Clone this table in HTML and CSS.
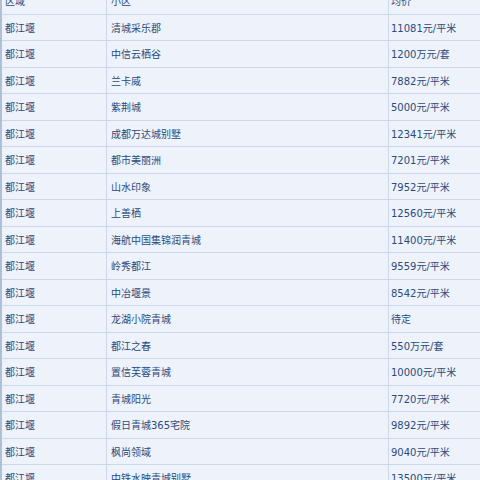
FILE: index.html
```html
<!DOCTYPE html>
<html lang="zh">
<head>
<meta charset="utf-8">
<link rel="stylesheet" href="styles.css">
</head>
<body>
<div class="wrap">
<table class="price-table">
<thead>
<tr><th class="c1">区域</th><th class="c2">小区</th><th class="c3">均价</th></tr>
</thead>
<tbody>
<tr><td>都江堰</td><td>清城采乐郡</td><td>11081元/平米</td></tr>
<tr><td>都江堰</td><td>中信云栖谷</td><td>1200万元/套</td></tr>
<tr><td>都江堰</td><td>兰卡威</td><td>7882元/平米</td></tr>
<tr><td>都江堰</td><td>紫荆城</td><td>5000元/平米</td></tr>
<tr><td>都江堰</td><td>成都万达城别墅</td><td>12341元/平米</td></tr>
<tr><td>都江堰</td><td>都市美丽洲</td><td>7201元/平米</td></tr>
<tr><td>都江堰</td><td>山水印象</td><td>7952元/平米</td></tr>
<tr><td>都江堰</td><td>上善栖</td><td>12560元/平米</td></tr>
<tr><td>都江堰</td><td>海航中国集锦润青城</td><td>11400元/平米</td></tr>
<tr><td>都江堰</td><td>岭秀都江</td><td>9559元/平米</td></tr>
<tr><td>都江堰</td><td>中冶堰景</td><td>8542元/平米</td></tr>
<tr><td>都江堰</td><td>龙湖小院青城</td><td>待定</td></tr>
<tr><td>都江堰</td><td>都江之春</td><td>550万元/套</td></tr>
<tr><td>都江堰</td><td>置信芙蓉青城</td><td>10000元/平米</td></tr>
<tr><td>都江堰</td><td>青城阳光</td><td>7720元/平米</td></tr>
<tr><td>都江堰</td><td>假日青城365宅院</td><td>9892元/平米</td></tr>
<tr><td>都江堰</td><td>枫尚领域</td><td>9040元/平米</td></tr>
<tr><td>都江堰</td><td>中铁水映青城别墅</td><td>13500元/平米</td></tr>
</tbody>
</table>
</div>
</body>
</html>
```
FILE: styles.css
```css
html, body {
  margin: 0;
  padding: 0;
  background: #eef3fb;
  overflow: hidden;
}
.wrap {
  margin-top: -12px;
  border-left: 2px solid #aebfd6;
}
.price-table {
  width: 478px;
  border-collapse: separate;
  border-spacing: 0;
  table-layout: fixed;
  font-family: "DejaVu Sans", "Noto Sans CJK SC", sans-serif;
  font-size: 10px;
  color: #2b4a7c;
}
.price-table th,
.price-table td {
  height: 25.5px;
  padding: 0 0 0 4px;
  text-align: left;
  font-weight: normal;
  vertical-align: middle;
  border-bottom: 1px solid #cbd8ea;
  white-space: nowrap;
  overflow: hidden;
}
.price-table th:first-child,
.price-table td:first-child {
  padding-left: 3px;
}
.price-table th:last-child,
.price-table td:last-child {
  padding-left: 2px;
}
.price-table th + th,
.price-table td + td {
  border-left: 1px solid #cbd8ea;
}
.c1 { width: 101px; }
.c2 { width: 277px; }
.c3 { width: auto; }
```
